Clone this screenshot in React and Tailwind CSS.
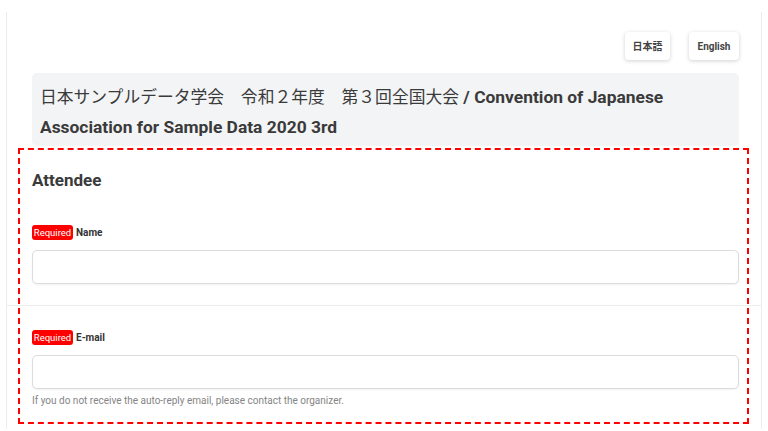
export default function App() {
  const font = { fontFamily: 'Roboto, "Noto Sans CJK JP", "Liberation Sans", sans-serif' };
  return (
    <div className="relative min-h-screen bg-white pt-[12px]" style={font}>
      <div className="mx-[6px] border-x border-[#ececec] bg-white text-[#333333]">
        <div className="pl-[25px] pr-[22px]">
          <div className="flex justify-end gap-[19px] pt-[20px]">
            <button className="h-[28px] w-[45px] rounded-[4px] bg-white text-[10px] font-bold text-[#444] shadow-[0_1px_4px_rgba(0,0,0,0.18)]">
              日本語
            </button>
            <button className="h-[28px] w-[50px] rounded-[4px] bg-white text-[10px] font-bold text-[#444] shadow-[0_1px_4px_rgba(0,0,0,0.18)]">
              English
            </button>
          </div>
          <div className="mt-[13px] rounded-[5px] bg-[#f3f4f6] pl-[8px] pr-[8px] pb-[4px] pt-[9px]">
            <h1 className="text-[17.4px] leading-[30px] text-[#3a3a3a]">
              <span className="text-[16.8px] font-normal">日本サンプルデータ学会　令和２年度　第３回全国大会</span>
              <span className="font-bold"> / Convention of Japanese Association for Sample Data 2020 3rd</span>
            </h1>
          </div>
        </div>

        <div className="border-b border-[#ececec] pl-[25px] pr-[22px] pb-[21px]">
          <h2 className="mt-[24px] text-[17px] font-bold leading-[20px] text-[#3a3a3a]">Attendee</h2>
          <div className="mt-[35px] flex items-center gap-[3px]">
            <span className="flex h-[15px] w-[41px] items-center justify-center rounded-[3px] bg-[#ff0000] text-[9.5px] leading-none text-white">
              Required
            </span>
            <span className="text-[10px] font-bold text-[#333]">Name</span>
          </div>
          <input
            type="text"
            className="mt-[10px] block h-[34px] w-full rounded-[5px] border border-[#dcdcdc] bg-white shadow-[0_1px_2px_rgba(0,0,0,0.06)] outline-none"
          />
        </div>

        <div className="pl-[25px] pr-[22px] pb-[22px]">
          <div className="mt-[24px] flex items-center gap-[3px]">
            <span className="flex h-[15px] w-[41px] items-center justify-center rounded-[3px] bg-[#ff0000] text-[9.5px] leading-none text-white">
              Required
            </span>
            <span className="text-[10px] font-bold text-[#333]">E-mail</span>
          </div>
          <input
            type="email"
            className="mt-[10px] block h-[34px] w-full rounded-[5px] border border-[#dcdcdc] bg-white shadow-[0_1px_2px_rgba(0,0,0,0.06)] outline-none"
          />
          <p className="mt-[6px] text-[10px] leading-[12px] text-[#858585]">
            If you do not receive the auto-reply email, please contact the organizer.
          </p>
        </div>
      </div>

      <div className="pointer-events-none absolute left-[18px] top-[148px] h-[276px] w-[731px] border-2 border-dashed border-[#ff0000]" />
    </div>
  );
}
